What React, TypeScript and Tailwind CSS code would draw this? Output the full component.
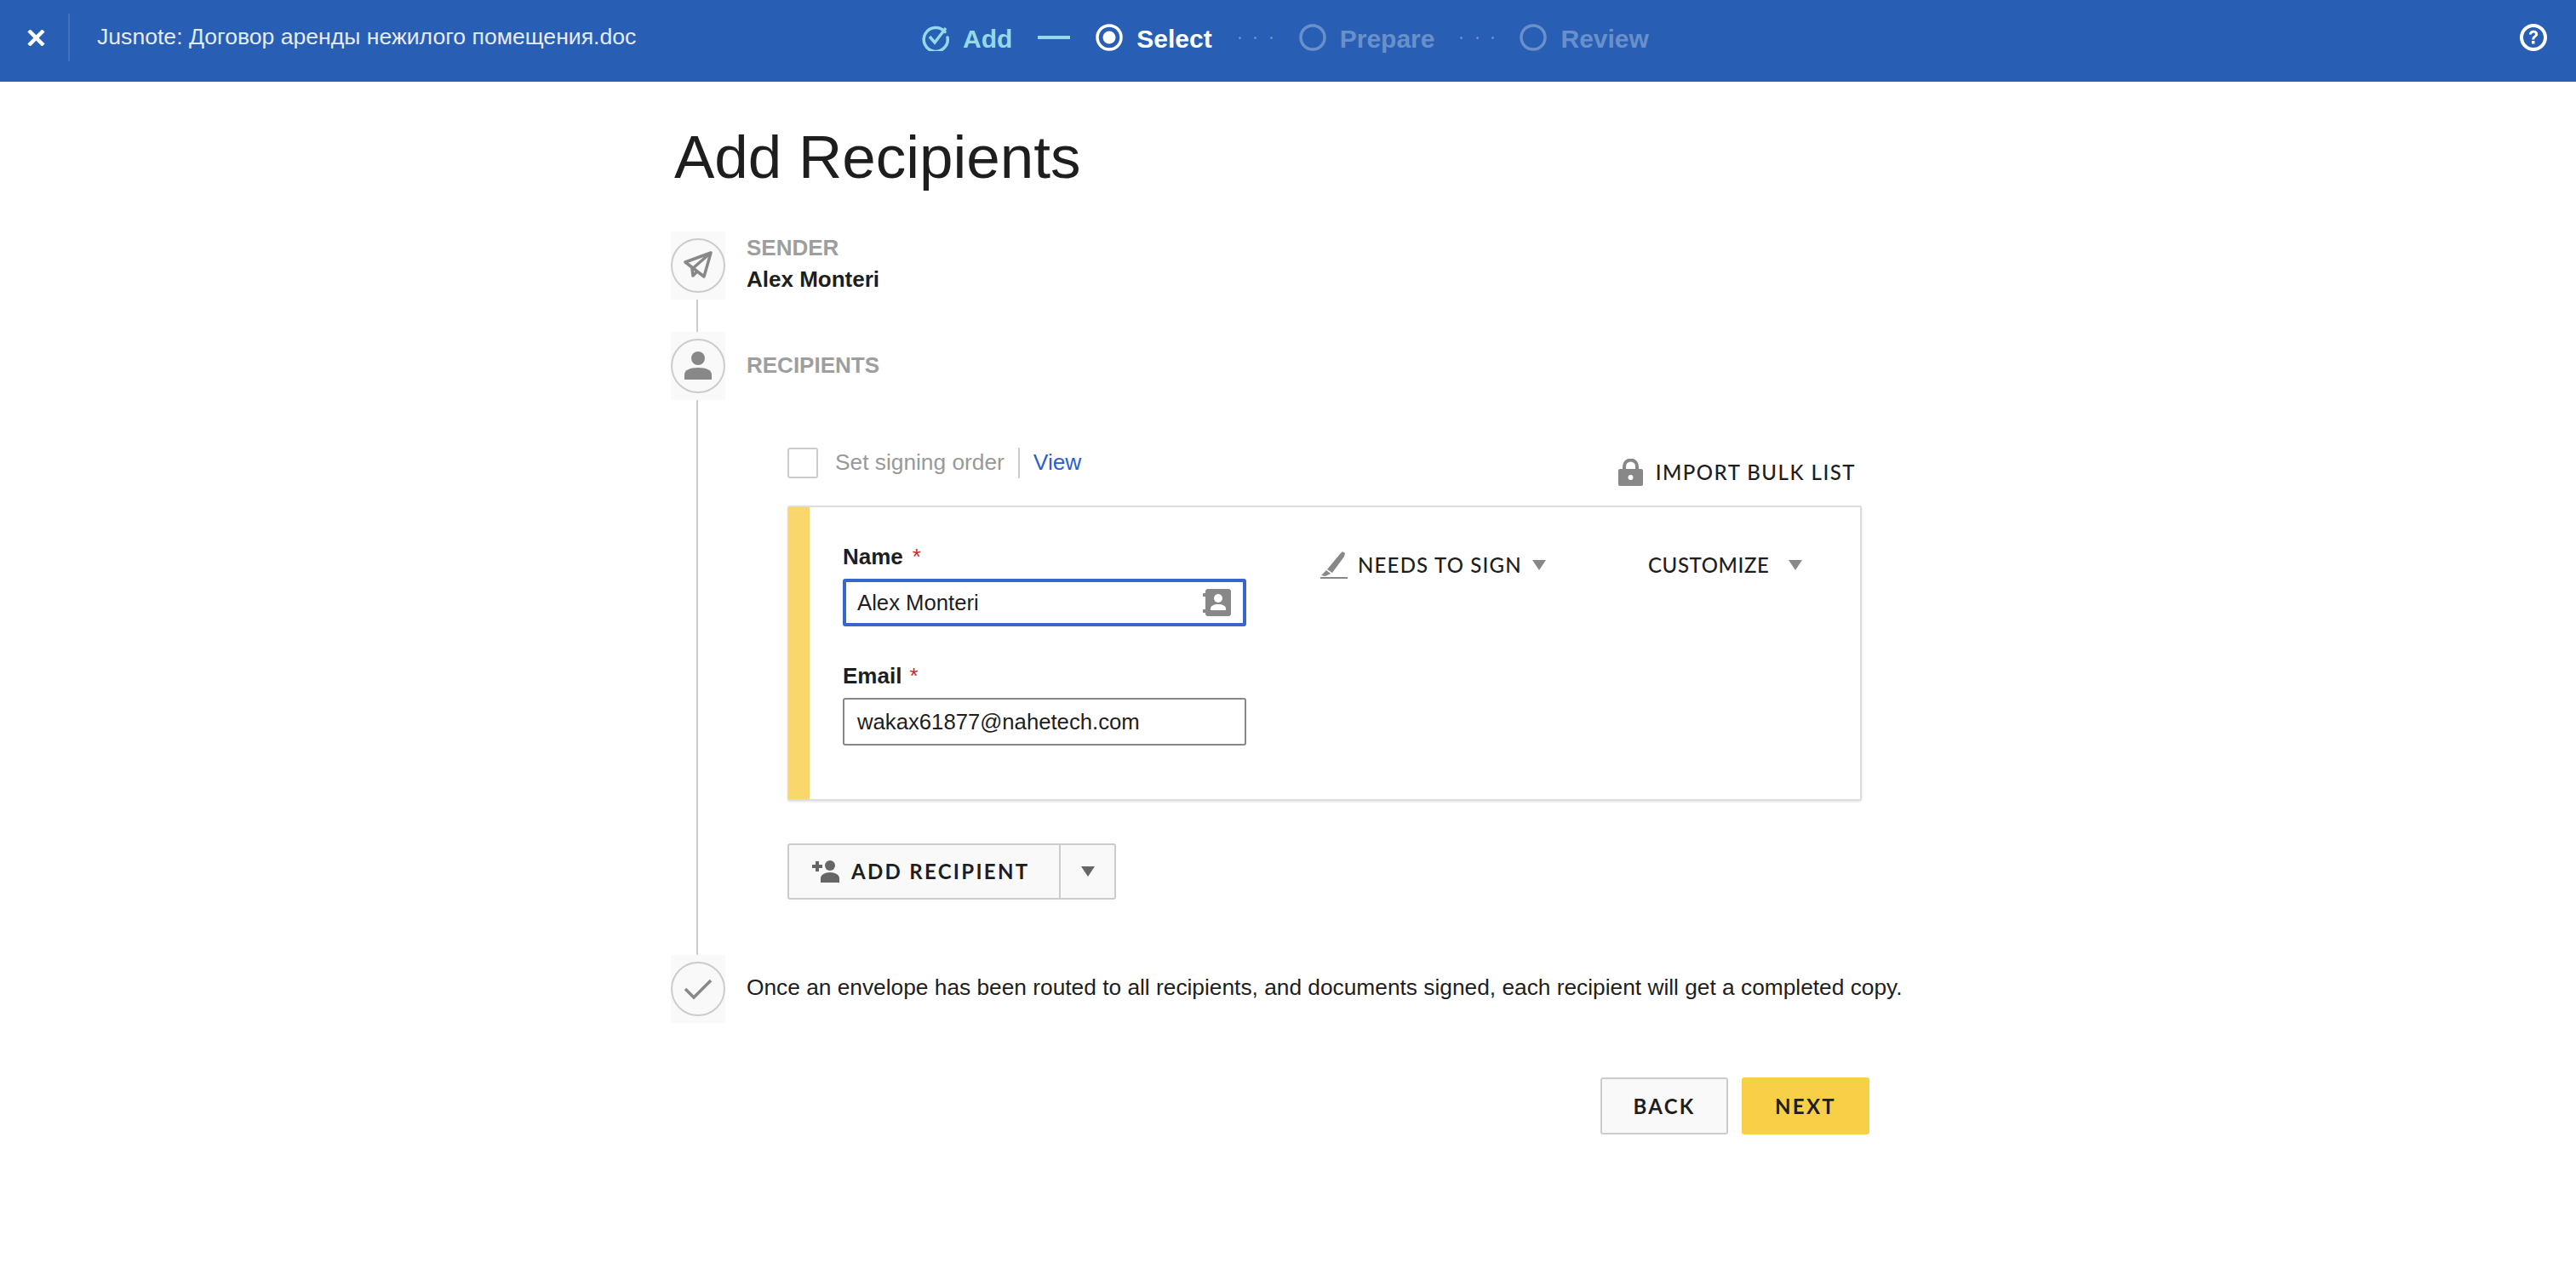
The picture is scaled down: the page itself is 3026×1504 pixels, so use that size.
const sans = "font-['Liberation_Sans',Arial,sans-serif]"
const caps = "font-['Lato',sans-serif] uppercase"
const small = `${caps} text-[24px] font-medium text-[#1e1e1e]`
const strong = `${caps} text-[24px] font-bold tracking-[2.300px] text-[#1e1e1e]`

function Caret({ className = "" }: { className?: string }) {
  return (
    <svg width="16" height="12" viewBox="0 0 16 12" className={className}>
      <path d="M0 0h16L8 12z" fill="#888888" />
    </svg>
  )
}

function Tile({ children }: { children: React.ReactNode }) {
  return (
    <div className="flex h-[80px] w-[64px] shrink-0 items-center justify-center bg-[#f9f9f9]">
      <div className="flex h-[64px] w-[64px] items-center justify-center rounded-full border-2 border-[#cccccc]">
        {children}
      </div>
    </div>
  )
}

function PersonIcon() {
  return (
    <svg width="34" height="34" viewBox="0 0 34 34" fill="#888888">
      <circle cx="17" cy="8" r="8" />
      <path d="M1 33v-6c0-5 6-8 16-8s16 3 16 8v6z" />
    </svg>
  )
}

function Step({ label, state }: { label: string; state: "done" | "active" | "todo" }) {
  const color =
    state === "done" ? "text-[#95d8ea]" : state === "active" ? "text-white" : "text-[#6a90cb]"
  return (
    <div className={`flex items-center gap-[16px] ${color}`}>
      <svg width="32" height="32" viewBox="0 0 32 32" fill="none" stroke="currentColor" strokeWidth="3.5">
        {state === "done" ? (
          <>
            <path d="M27 9.5A14 14 0 1 0 30 16" strokeLinecap="round" />
            <path d="M9 15l6 7L28 5" strokeWidth="3.5" />
          </>
        ) : (
          <circle cx="16" cy="16" r="14" />
        )}
        {state === "active" && <circle cx="16" cy="16" r="7.5" fill="currentColor" stroke="none" />}
      </svg>
      <span className="pt-[3px] text-[30px] font-bold leading-none">{label}</span>
    </div>
  )
}

function Dots() {
  return (
    <div className="flex w-[40px] justify-between">
      <span className="h-[3px] w-[3px] rounded-full bg-[#6a90cb]" />
      <span className="h-[3px] w-[3px] rounded-full bg-[#6a90cb]" />
      <span className="h-[3px] w-[3px] rounded-full bg-[#6a90cb]" />
    </div>
  )
}

function Field({ label, value, focused, gap }: { label: string; value: string; focused?: boolean; gap: string }) {
  return (
    <div>
      <div className={`flex h-[32px] items-center text-[26px] font-bold leading-none text-[#1e1e1e] ${gap}`}>
        <span>{label}</span>
        <span className="text-[26px] font-normal text-[#c42b2b]">*</span>
      </div>
      <div
        className={`mt-[10px] flex h-[56px] w-[474px] items-center justify-between rounded-[3px] bg-white pr-[14px] text-[25.700px] text-[#1e1e1e] ${
          focused ? "border-4 border-[#3a65c9] pl-[13px]" : "border-2 border-[#888888] pl-[15px]"
        }`}
      >
        <span>{value}</span>
        {focused && (
          <svg width="33" height="32" viewBox="0 0 33 32">
            <rect x="3" width="30" height="32" rx="3" fill="#888888" />
            <path d="M0 5h5v4H0zM0 24h5v4H0z" fill="#888888" />
            <circle cx="18" cy="11" r="5" fill="#ffffff" />
            <path d="M9 25v-2c0-3 4-5 9-5s9 2 9 5v2z" fill="#ffffff" />
          </svg>
        )}
      </div>
    </div>
  )
}

export default function App() {
  return (
    <div className={`min-h-[1504px] bg-white ${sans}`}>
      <header className="flex h-[96px] items-center bg-[#285fb4] pb-[8px] text-white">
        <div className="flex h-[56px] w-[82px] shrink-0 items-center justify-center border-r-2 border-[#3f71bd] pl-[5px]">
          <svg width="21" height="19" viewBox="0 0 21 19" stroke="#ffffff" strokeWidth="4.5">
            <path d="M2 1l17 17M19 1L2 18" />
          </svg>
        </div>
        <div className="w-[1001px] shrink-0 pl-[32px] text-[26.600px] text-[#e4ebf6]">
          Jusnote: Договор аренды нежилого помещения.doc
        </div>
        <nav className="flex items-center">
          <Step label="Add" state="done" />
          <span className="mx-[30px] h-[4px] w-[38px] bg-[#95d8ea]" />
          <Step label="Select" state="active" />
          <div className="mx-[31px]">
            <Dots />
          </div>
          <Step label="Prepare" state="todo" />
          <div className="mx-[30px]">
            <Dots />
          </div>
          <Step label="Review" state="todo" />
        </nav>
        <div className="ml-auto pr-[34px]">
          <svg width="32" height="32" viewBox="0 0 32 32" className="block">
            <circle cx="16" cy="16" r="14" fill="none" stroke="#ffffff" strokeWidth="4" />
            <path d="M11 12.5c0-3 2.200-4.800 5.200-4.800 3 0 5 1.700 5 4.300 0 3.500-4 3.500-4 6.500h-3c0-4.300 3.800-4 3.800-6.400 0-1-.8-1.700-1.900-1.700-1.200 0-2 .8-2.100 2.100z" fill="#ffffff" />
            <rect x="14" y="20" width="3.500" height="3.500" fill="#ffffff" />
          </svg>
        </div>
      </header>

      <main className="mx-auto w-[1450px]">
        <h1 className="flex h-[176px] items-start pl-[4px] pt-[49px] text-[71px] font-normal leading-[80px] text-[#1e1e1e]">
          Add Recipients
        </h1>

        <div className="flex gap-[25px]">
          <Tile>
            <svg width="34" height="34" viewBox="0 0 34 34" fill="none" stroke="#888888" strokeWidth="3.500" strokeLinejoin="round">
              <path d="M32 2L2 13l22 17z" />
              <path d="M32 2L10 21l1 8 5-5" />
            </svg>
          </Tile>
          <div className="pt-[3px]">
            <div className="text-[26px] font-bold leading-[32px] text-[#9e9e9e]">SENDER</div>
            <div className="mt-[5px] text-[26px] font-bold leading-[32px] text-[#1e1e1e]">Alex Monteri</div>
          </div>
        </div>
        <div className="ml-[30px] h-[38px] w-[2px] bg-[#cccccc]" />
        <div className="flex items-center gap-[25px]">
          <Tile>
            <PersonIcon />
          </Tile>
          <div className="pb-[2px] text-[26px] font-bold text-[#9e9e9e]">RECIPIENTS</div>
        </div>

        <section className="ml-[30px] border-l-2 border-[#cccccc] pl-[105px] pb-[65px] pt-[56px]">
          <div className="flex h-[68px] w-[1262px] items-start justify-between">
            <div className="flex h-[36px] items-center">
              <span className="h-[36px] w-[36px] rounded-[3px] border-2 border-[#cccccc] bg-white" />
              <span className="ml-[20px] text-[26.300px] text-[#999999]">Set signing order</span>
              <span className="mx-[16px] h-[36px] w-[2px] bg-[#cccccc]" />
              <span className="text-[26.300px] text-[#2a5fd0]">View</span>
            </div>
            <div className="mt-[11px] flex items-center gap-[15px] pr-[7px]">
              <svg width="29" height="32" viewBox="0 0 29 32" fill="#888888">
                <path d="M5 14V9a9.500 9.500 0 0 1 19 0v5h-4V9a5.500 5.500 0 0 0-11 0v5z" />
                <path d="M2 12h25a2 2 0 0 1 2 2v16a2 2 0 0 1-2 2H2a2 2 0 0 1-2-2V14a2 2 0 0 1 2-2z" />
                <circle cx="14.500" cy="22" r="3" fill="#ffffff" />
              </svg>
              <span className={`${small} tracking-[1.500px]`}>Import bulk list</span>
            </div>
          </div>

          <div className="flex h-[347px] w-[1262px] rounded-[3px] border-2 border-[#dddddd] shadow-[0_1px_3px_rgba(0,0,0,0.12)]">
            <div className="-ml-[1px] w-[25px] shrink-0 bg-[#f9d76c]" />
            <div className="flex w-[600px] shrink-0 flex-col gap-[42px] pl-[39px] pt-[42px]">
              <Field label="Name" value="Alex Monteri" focused gap="gap-[11px]" />
              <Field label="Email" value="wakax61877@nahetech.com" gap="gap-[9px]" />
            </div>
            <div className="flex h-[86px] items-end">
              <div className="flex w-[385px] items-center">
                <svg width="32" height="32" viewBox="0 0 32 32" fill="#888888" className="mr-[12px]">
                  <path d="M26 0l3 2-1 4L14 25l-6-4L23 3z" />
                  <path d="M7 22l5 4-6 3-5-1zM0 30h32v2H0z" />
                </svg>
                <span className={`${small} tracking-[1.200px]`}>Needs to sign</span>
                <Caret className="ml-[12px]" />
              </div>
              <div className="flex items-center">
                <span className={`${small} tracking-[0.600px]`}>Customize</span>
                <Caret className="ml-[23px]" />
              </div>
            </div>
          </div>

          <div className="mt-[50px] flex h-[66px] w-[386px] rounded-[3px] border-2 border-[#cccccc] bg-[#f9f9f9]">
            <div className="flex w-[319px] items-center border-r-2 border-[#cccccc] pl-[27px]">
              <svg width="34" height="26" viewBox="0 0 34 26" fill="#666666">
                <path d="M4 1h4v4h4v4H8v4H4V9H0V5h4z" />
                <circle cx="21" cy="6" r="6" />
                <path d="M10 26v-5c0-4 5-7 11-7s11 3 11 7v5z" />
              </svg>
              <span className={`${strong} ml-[12px]`}>Add recipient</span>
            </div>
            <div className="flex flex-1 items-center justify-center">
              <svg width="16" height="12" viewBox="0 0 16 12">
                <path d="M0 0h16L8 12z" fill="#666666" />
              </svg>
            </div>
          </div>
        </section>

        <div className="flex items-center gap-[25px]">
          <Tile>
            <svg width="34" height="26" viewBox="0 0 34 26" fill="none" stroke="#888888" strokeWidth="3.500">
              <path d="M2 13l10 10L32 3" />
            </svg>
          </Tile>
          <p className="whitespace-nowrap pb-[3px] text-[26.300px] text-[#1e1e1e]">
            Once an envelope has been routed to all recipients, and documents signed, each recipient will get a completed copy.
          </p>
        </div>

        <div className="mt-[64px] flex justify-end gap-[16px] pr-[42px]">
          <button className={`${strong} h-[67px] w-[150px] rounded-[3px] border-2 border-[#cccccc] bg-[#f9f9f9]`}>
            Back
          </button>
          <button className={`${strong} h-[67px] w-[150px] rounded-[3px] bg-[#f8d048]`}>
            Next
          </button>
        </div>
      </main>
    </div>
  )
}
